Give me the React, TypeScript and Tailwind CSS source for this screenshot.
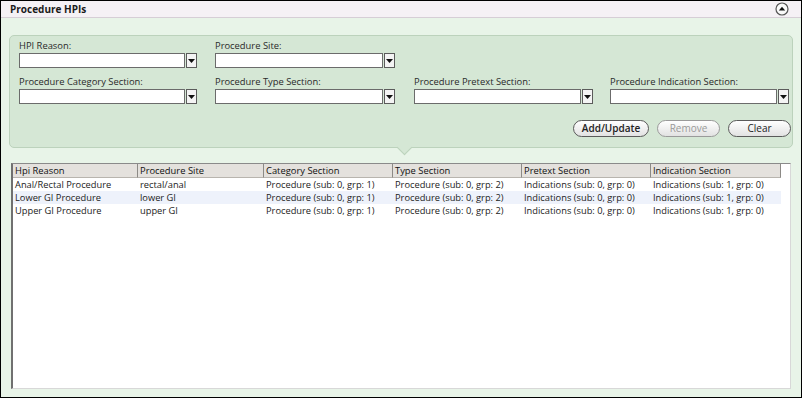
import React from 'react'

const font = { fontFamily: '"Open Sans", "Noto Sans", sans-serif' }

const Dropdown = ({ width }: { width: number }) => (
  <div className="flex h-[15px] items-stretch gap-[1px]">
    <div
      className="border border-[#6b6b6b] bg-white"
      style={{ width: width }}
    />
    <div className="flex w-[11px] items-center justify-center border border-[#5b5b5b] bg-[#f4f4f4]">
      <svg width="7" height="4" viewBox="0 0 7 4">
        <path d="M0 0 H7 L3.5 4 Z" fill="#111" />
      </svg>
    </div>
  </div>
)

const Field = ({ label, width }: { label: string; width: number }) => (
  <div className="flex flex-col">
    <span className="mb-[1px] text-[9.4px] leading-[12px] text-[#2a2a2a]">{label}</span>
    <Dropdown width={width} />
  </div>
)

const PillButton = ({
  children,
  width,
  disabled,
  bold,
}: {
  children: React.ReactNode
  width: number
  disabled?: boolean
  bold?: boolean
}) => (
  <button
    className={
      'h-[17px] rounded-full border bg-gradient-to-b from-white to-[#e2e2e2] text-[10px] leading-[15px] ' +
      (disabled
        ? 'border-[#9a9a9a] text-[#9a9a9a]'
        : 'border-[#5a5a5a] text-[#222]') +
      (bold ? ' font-semibold' : '')
    }
    style={{ width: width }}
  >
    {children}
  </button>
)

const columns = [
  { title: 'Hpi Reason', w: 125 },
  { title: 'Procedure Site', w: 126 },
  { title: 'Category Section', w: 129 },
  { title: 'Type Section', w: 129 },
  { title: 'Pretext Section', w: 129 },
  { title: 'Indication Section', w: 130 },
]

const rows = [
  [
    'Anal/Rectal Procedure',
    'rectal/anal',
    'Procedure (sub: 0, grp: 1)',
    'Procedure (sub: 0, grp: 2)',
    'Indications (sub: 0, grp: 0)',
    'Indications (sub: 1, grp: 0)',
  ],
  [
    'Lower GI Procedure',
    'lower GI',
    'Procedure (sub: 0, grp: 1)',
    'Procedure (sub: 0, grp: 2)',
    'Indications (sub: 0, grp: 0)',
    'Indications (sub: 1, grp: 0)',
  ],
  [
    'Upper GI Procedure',
    'upper GI',
    'Procedure (sub: 0, grp: 1)',
    'Procedure (sub: 0, grp: 2)',
    'Indications (sub: 0, grp: 0)',
    'Indications (sub: 1, grp: 0)',
  ],
]

export default function App() {
  return (
    <div
      className="flex h-[398px] w-[802px] flex-col overflow-hidden border border-black bg-[#e8f4e8]"
      style={font}
    >
      {/* title bar */}
      <div className="flex h-[17px] shrink-0 items-center justify-between border-b border-[#d6ced6] bg-[#f5f1f5] pl-[9px] pr-[12px]">
        <span className="text-[10px] font-bold leading-[14px] text-[#1a1a1a]">
          Procedure HPIs
        </span>
        <svg width="14" height="14" viewBox="0 0 14 14">
          <circle cx="7" cy="7" r="6" fill="#fafafa" stroke="#555" strokeWidth="1.2" />
          <path d="M3.8 8.6 L7 4.8 L10.2 8.6 Z" fill="#111" />
        </svg>
      </div>

      {/* filter panel */}
      <div className="px-[8px] pt-[17px]">
        <div className="relative h-[113px] rounded-[5px] border border-[#bcd2bc] bg-[#d5e7d5] pl-[9px] pt-[4px]">
          <div className="grid grid-cols-[196px_199px_196px_190px] gap-y-[8px]">
            <Field label="HPI Reason:" width={166} />
            <Field label="Procedure Site:" width={168} />
            <div />
            <div />
            <Field label="Procedure Category Section:" width={166} />
            <Field label="Procedure Type Section:" width={168} />
            <Field label="Procedure Pretext Section:" width={167} />
            <Field label="Procedure Indication Section:" width={167} />
          </div>
          <div className="mt-[16px] flex justify-end gap-[8px] pr-[1px]">
            <PillButton width={76} bold>
              Add/Update
            </PillButton>
            <PillButton width={63} disabled>
              Remove
            </PillButton>
            <PillButton width={63}>Clear</PillButton>
          </div>
          {/* notch */}
          <div className="absolute bottom-[-6px] left-[389px] h-[11px] w-[11px] rotate-45 border-b border-r border-[#bcd2bc] bg-[#d5e7d5]" />
        </div>
      </div>

      {/* table */}
      <div className="mx-[10px] mt-[15px] mb-[8px] flex-1 border-l-2 border-t border-r border-b border-l-[#707070] border-t-[#8a8a8a] border-r-[#d8d8d8] border-b-[#d8d8d8] bg-white">
        <div className="flex h-[14px] w-[768px] bg-[#e4e1dd]">
          {columns.map((c) => (
            <div
              key={c.title}
              className="border-b border-r border-b-[#b8b4ae] border-r-[#8c8a86] pl-[2px] text-[9.4px] leading-[13px] text-[#111]"
              style={{ width: c.w }}
            >
              {c.title}
            </div>
          ))}
        </div>
        {rows.map((r, i) => (
          <div
            key={i}
            className={'flex h-[13px] w-[768px] ' + (i === 1 ? 'bg-[#eef2fb]' : '')}
          >
            {r.map((cell, j) => (
              <div
                key={j}
                className="pl-[2px] text-[9.3px] leading-[13px] text-[#222]"
                style={{ width: columns[j].w }}
              >
                {cell}
              </div>
            ))}
          </div>
        ))}
      </div>
    </div>
  )
}
